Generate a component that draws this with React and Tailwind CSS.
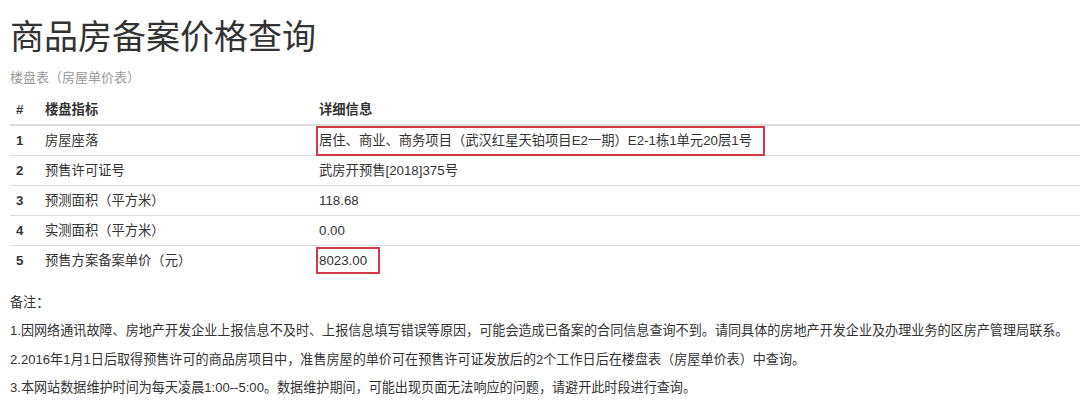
import React from "react";

const rows = [
  ["1", "房屋座落", "居住、商业、商务项目（武汉红星天铂项目E2一期）E2-1栋1单元20层1号", "wide"],
  ["2", "预售许可证号", "武房开预售[2018]375号", null],
  ["3", "预测面积（平方米）", "118.68", null],
  ["4", "实测面积（平方米）", "0.00", null],
  ["5", "预售方案备案单价（元）", "8023.00", "narrow"],
];

const font = { fontFamily: '"Liberation Sans", "Noto Sans CJK SC", sans-serif' };

export default function App() {
  return (
    <div className="w-[1080px] h-[400px] overflow-hidden bg-white text-[#333] pl-[10px]" style={font}>
      <h1 className="pt-[17px] text-[34px] leading-[40px] font-normal text-[#333]">商品房备案价格查询</h1>
      <div className="mt-[11px] text-[13px] leading-[20px] text-[#999]">楼盘表（房屋单价表）</div>
      <table className="mt-[7px] w-[1070px] border-collapse text-[13.3px] leading-[17px]">
        <thead>
          <tr className="border-b-2 border-[#ddd]">
            <th className="w-[29px] px-[6px] py-[6px] text-left font-bold">#</th>
            <th className="w-[274px] px-[6px] py-[6px] text-left font-bold">楼盘指标</th>
            <th className="px-[6px] py-[6px] text-left font-bold">详细信息</th>
          </tr>
        </thead>
        <tbody>
          {rows.map(([n, k, v, box], i) => (
            <tr key={n} className={i === 0 ? "" : "border-t border-[#ddd]"}>
              <td className="px-[6px] py-[6px] font-bold">{n}</td>
              <td className="px-[6px] py-[6px]">{k}</td>
              <td className="relative px-[6px] py-[6px]">
                {v}
                {box === "wide" && (
                  <span className="absolute left-[3px] top-0 w-[449px] h-[30px] border-2 border-[#d23a45]" />
                )}
                {box === "narrow" && (
                  <span className="absolute left-[3px] top-[1px] w-[64px] h-[27px] border-2 border-[#d23a45]" />
                )}
              </td>
            </tr>
          ))}
        </tbody>
      </table>
      <div className="mt-[14px] text-[13.1px] leading-[28.3px] whitespace-nowrap">
        <p>备注：</p>
        <p>1.因网络通讯故障、房地产开发企业上报信息不及时、上报信息填写错误等原因，可能会造成已备案的合同信息查询不到。请同具体的房地产开发企业及办理业务的区房产管理局联系。</p>
        <p>2.2016年1月1日后取得预售许可的商品房项目中，准售房屋的单价可在预售许可证发放后的2个工作日后在楼盘表（房屋单价表）中查询。</p>
        <p>3.本网站数据维护时间为每天凌晨1:00--5:00。数据维护期间，可能出现页面无法响应的问题，请避开此时段进行查询。</p>
      </div>
    </div>
  );
}
